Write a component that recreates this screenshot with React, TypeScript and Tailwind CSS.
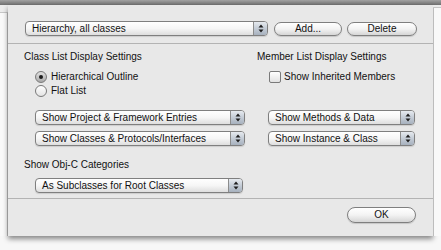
import React from "react";

const Arrows = () => (
  <svg width="6" height="9" viewBox="0 0 6 9">
    <path d="M3 0.5 L5.5 3.5 L0.5 3.5 Z" fill="#1e1e1e" />
    <path d="M3 8.5 L5.5 5.5 L0.5 5.5 Z" fill="#1e1e1e" />
  </svg>
);

const Popup = ({ label, className }: { label: string; className: string }) => (
  <div
    className={`flex h-[15px] items-stretch rounded-[4px] border border-[#7f7f7f] bg-gradient-to-b from-white via-[#f6f6f6] to-[#dedede] shadow-[0_1px_1px_rgba(0,0,0,0.12)] ${className}`}
  >
    <span className="flex-1 truncate pl-[6px] text-[10px] leading-[13px] text-[#111]">{label}</span>
    <span className="flex w-[14px] items-center justify-center rounded-r-[3px] border-l border-[#8c8c8c] bg-gradient-to-b from-[#e6eaef] via-[#c4ccd6] to-[#a7b1be]">
      <Arrows />
    </span>
  </div>
);

const PillButton = ({ label, className }: { label: string; className: string }) => (
  <div
    className={`flex items-center justify-center rounded-full border border-[#7f7f7f] bg-gradient-to-b from-white via-[#f3f3f3] to-[#d6d6d6] text-[10px] leading-[12px] text-[#111] shadow-[0_1px_1px_rgba(0,0,0,0.15)] ${className}`}
  >
    {label}
  </div>
);

const Radio = ({ checked, label }: { checked?: boolean; label: string }) => (
  <div className="flex h-[12px] items-center gap-[4px]">
    <span
      className={`flex h-[12px] w-[12px] items-center justify-center rounded-full border border-[#7a7a7a] ${
        checked ? "bg-gradient-to-b from-[#e2e2e2] to-[#a9a9a9]" : "bg-gradient-to-b from-white to-[#e4e4e4]"
      }`}
    >
      {checked && <span className="h-[4px] w-[4px] rounded-full bg-[#1c1c1c]" />}
    </span>
    <span className="text-[10px] leading-[12px] text-[#111]">{label}</span>
  </div>
);

export default function App() {
  return (
    <div className="flex h-[250px] w-[441px] flex-col overflow-hidden bg-[#f7f7f7] font-['Liberation_Sans',Arial,sans-serif]">
      <div className="h-[5px] w-full shrink-0 bg-gradient-to-b from-[#a2a2a2] to-[#6f6f6f]" />
      <div className="flex">
        <div className="flex w-[8px] flex-col">
          <div className="h-[8px] border-b border-[#c6c6c6] bg-[#ececec]" />
          <div className="flex-1 border-r border-[#bdbdbd] bg-[#f9f9f9]" />
        </div>
        <div className="flex h-[231px] w-[425px] flex-col bg-[#e8e8e8] shadow-[0_3px_5px_rgba(0,0,0,0.45)]">
          {/* top row */}
          <div className="flex items-center pl-[17px] pt-[16px]">
            <Popup label="Hierarchy, all classes" className="w-[243px]" />
            <PillButton label="Add..." className="ml-[6px] h-[14px] w-[68px]" />
            <PillButton label="Delete" className="ml-[5px] h-[14px] w-[70px]" />
          </div>
          <div className="mt-[7px] border-t border-[#b3b3b3]" />

          {/* settings */}
          <div className="grid grid-cols-[233px_1fr] pl-[16px] pt-[7px]">
            <div className="text-[10px] leading-[12px] text-[#111]">Class List Display Settings</div>
            <div className="text-[10px] leading-[12px] text-[#111]">Member List Display Settings</div>
          </div>
          <div className="grid grid-cols-[233px_1fr] pl-[16px] pt-[8px]">
            <div className="flex flex-col gap-[2px] pl-[11px]">
              <Radio checked label="Hierarchical Outline" />
              <Radio label="Flat List" />
            </div>
            <div className="flex h-[12px] items-center gap-[3px] pl-[12px]">
              <span className="h-[12px] w-[12px] rounded-[2px] border border-[#7a7a7a] bg-gradient-to-b from-white to-[#e2e2e2]" />
              <span className="text-[10px] leading-[12px] text-[#111]">Show Inherited Members</span>
            </div>
          </div>
          <div className="grid grid-cols-[233px_1fr] pl-[16px] pt-[13px]">
            <div className="pl-[11px]">
              <Popup label="Show Project & Framework Entries" className="w-[210px]" />
            </div>
            <div className="pl-[11px]">
              <Popup label="Show Methods & Data" className="w-[147px]" />
            </div>
          </div>
          <div className="grid grid-cols-[233px_1fr] pl-[16px] pt-[6px]">
            <div className="pl-[11px]">
              <Popup label="Show Classes & Protocols/Interfaces" className="w-[210px]" />
            </div>
            <div className="pl-[11px]">
              <Popup label="Show Instance & Class" className="w-[147px]" />
            </div>
          </div>
          <div className="pl-[16px] pt-[13px] text-[10px] leading-[12px] text-[#111]">Show Obj-C Categories</div>
          <div className="pl-[27px] pt-[7px]">
            <Popup label="As Subclasses for Root Classes" className="w-[208px]" />
          </div>
          <div className="mt-[5px] border-t border-[#b3b3b3]" />

          <div className="flex justify-end pr-[17px] pt-[8px]">
            <PillButton label="OK" className="h-[16px] w-[69px]" />
          </div>
        </div>
        <div className="flex w-[8px] flex-col">
          <div className="h-[3px] border-b border-[#c6c6c6] bg-[#ececec]" />
          <div className="flex-1 border-l border-[#bdbdbd] bg-[#f9f9f9]" />
        </div>
      </div>
    </div>
  );
}
